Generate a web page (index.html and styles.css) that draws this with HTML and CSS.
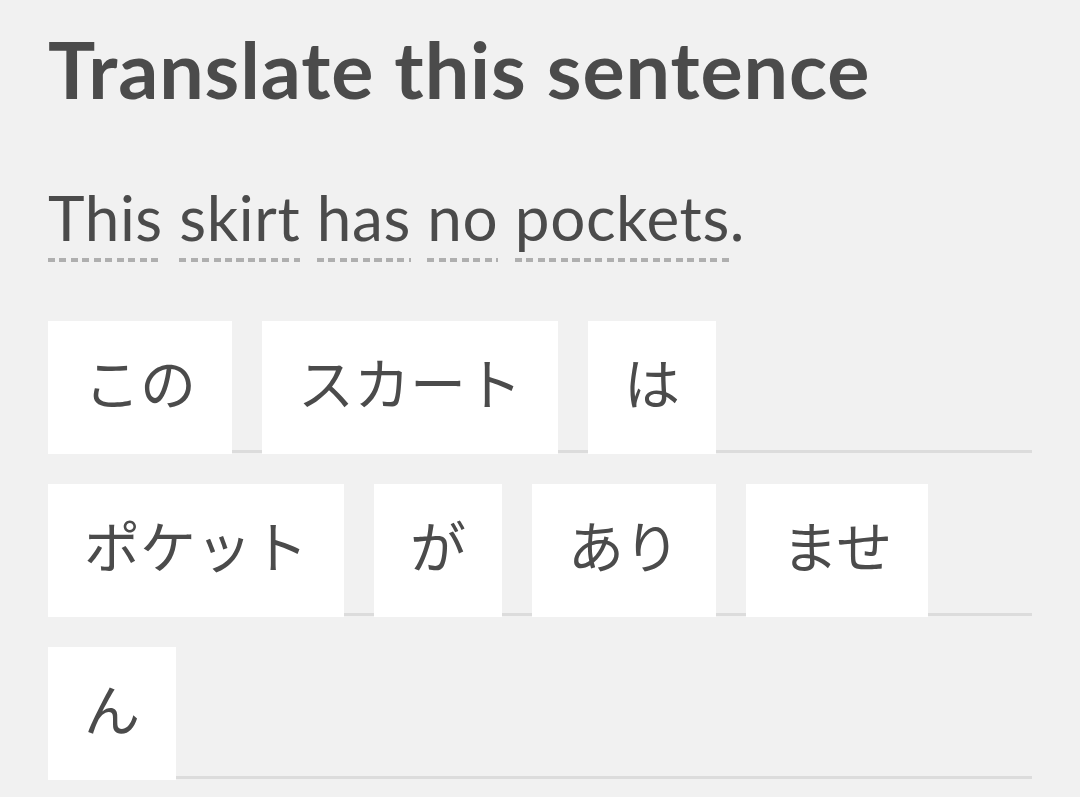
FILE: index.html
```html
<!DOCTYPE html>
<html lang="en">
<head>
<meta charset="utf-8">
<title>Translate this sentence</title>
<link rel="stylesheet" href="styles.css">
</head>
<body>
<main class="challenge">
  <h1 class="title">Translate this sentence</h1>
  <p class="prompt"><span class="word">This</span> <span class="word">skirt</span> <span class="word">has</span> <span class="word">no</span> <span class="word">pockets</span>.</p>
  <div class="answer">
    <span class="tile" lang="ja">この</span>
    <span class="tile" lang="ja">スカート</span>
    <span class="tile" lang="ja">は</span>
    <span class="tile" lang="ja">ポケット</span>
    <span class="tile" lang="ja">が</span>
    <span class="tile" lang="ja">あり</span>
    <span class="tile" lang="ja">ませ</span>
    <span class="tile" lang="ja">ん</span>
  </div>
</main>
</body>
</html>
```

FILE: styles.css
```css
html, body {
  margin: 0;
  padding: 0;
  background: #f1f1f1;
}

body {
  color: #4b4b4b;
  font-family: "Lato", "Noto Sans", sans-serif;
  width: 1080px;
  height: 797px;
  overflow: hidden;
}

.challenge {
  padding: 21px 48px 0 48px;
}

.title {
  margin: 0;
  font-size: 79px;
  font-weight: 700;
  line-height: 96px;
  letter-spacing: 0.9px;
}

.prompt {
  margin: 64px 0 0 0;
  font-size: 62px;
  font-weight: 400;
  line-height: 72px;
  letter-spacing: 0.6px;
}

.word {
  padding-bottom: 8px;
  background-image: repeating-linear-gradient(to right, #afafaf 0 7px, transparent 7px 11.5px);
  background-size: 100% 4px;
  background-position: left bottom;
  background-repeat: no-repeat;
}

.answer {
  margin-top: 68px;
  display: flex;
  flex-wrap: wrap;
  gap: 30px;
  background-image: repeating-linear-gradient(to bottom, transparent 0 129px, #dcdcdc 129px 132px, transparent 132px 163px);
}

.tile {
  height: 133px;
  padding: 0 36px 14px 36px;
  box-sizing: border-box;
  background: #ffffff;
  display: flex;
  align-items: center;
  font-family: "Noto Sans CJK JP", "Noto Sans", sans-serif;
  font-size: 56px;
  font-weight: 400;
  line-height: 1;
}
```
